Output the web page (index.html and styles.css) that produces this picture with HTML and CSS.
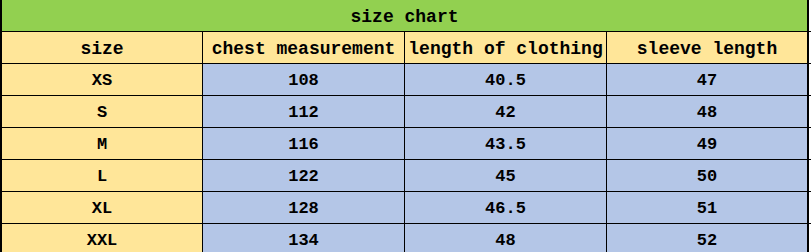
FILE: index.html
```html
<!DOCTYPE html>
<html>
<head>
<meta charset="utf-8">
<link rel="stylesheet" href="styles.css">
</head>
<body>
<div class="sheet">
  <div class="row">
    <div class="cell title">size chart</div>
  </div>
  <div class="row head">
    <div class="cell first">size</div>
    <div class="cell">chest measurement</div>
    <div class="cell">length of clothing</div>
    <div class="cell last">sleeve length</div>
  </div>
  <div class="row data">
    <div class="cell first">XS</div><div class="cell">108</div><div class="cell">40.5</div><div class="cell last">47</div>
  </div>
  <div class="row data">
    <div class="cell first">S</div><div class="cell">112</div><div class="cell">42</div><div class="cell last">48</div>
  </div>
  <div class="row data">
    <div class="cell first">M</div><div class="cell">116</div><div class="cell">43.5</div><div class="cell last">49</div>
  </div>
  <div class="row data">
    <div class="cell first">L</div><div class="cell">122</div><div class="cell">45</div><div class="cell last">50</div>
  </div>
  <div class="row data">
    <div class="cell first">XL</div><div class="cell">128</div><div class="cell">46.5</div><div class="cell last">51</div>
  </div>
  <div class="row data">
    <div class="cell first">XXL</div><div class="cell">134</div><div class="cell">48</div><div class="cell last">52</div>
  </div>
</div>
</body>
</html>
```

FILE: styles.css
```css
html, body {
  margin: 0;
  padding: 0;
  background: #ffffff;
}
.sheet {
  width: 811px;
  font-family: "Liberation Mono", "DejaVu Sans Mono", monospace;
  color: #000;
}
.row {
  display: grid;
  grid-template-columns: 203px 202px 202px 202px 2px;
  height: 32px;
  box-sizing: border-box;
  border-bottom: 1px solid #000;
}
.cell {
  box-sizing: border-box;
  border-right: 1px solid #000;
  display: flex;
  align-items: center;
  justify-content: center;
  white-space: nowrap;
  overflow: visible;
}
.cell.first {
  border-left: 2px solid #000;
  background: #ffe699;
}
.cell.last {
  border-right: 2px solid #000;
}
.title {
  grid-column: 1 / 5;
  background: #92d050;
  border-left: 2px solid #000;
  border-right: 2px solid #000;
  font-size: 18px;
  font-weight: bold;
  padding-top: 3px;
}
.head .cell {
  background: #ffe699;
  font-size: 18px;
  font-weight: bold;
  padding-top: 3px;
}
.data .cell {
  background: #b4c6e7;
  font-size: 17px;
  font-weight: bold;
  padding-top: 2px;
}
.data .cell.first {
  background: #ffe699;
}
```
